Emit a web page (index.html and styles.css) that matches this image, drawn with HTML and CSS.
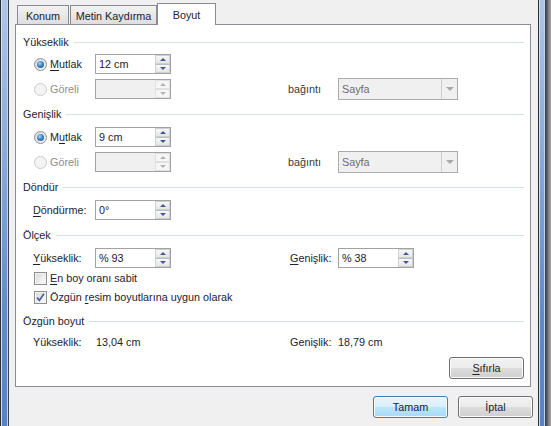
FILE: index.html
```html
<!DOCTYPE html>
<html lang="tr">
<head>
<meta charset="utf-8">
<title>Boyut</title>
<link rel="stylesheet" href="styles.css">
</head>
<body>
<div class="window">
  <div class="frame-l"></div>
  <div class="dialog">
    <div class="tabs">
      <div class="tab t-konum">Konum</div>
      <div class="tab t-metin">Metin Kaydırma</div>
      <div class="tab t-boyut active">Boyut</div>
    </div>
    <div class="panel">
      <div class="head mt9"><span>Yükseklik</span><i></i></div>
      <div class="row mt4">
        <div class="opt"><span class="radio on"></span><span><u>M</u>utlak</span></div>
        <div class="spin"><span class="val">12 cm</span><span class="arrows"><b class="up"></b><b class="dn"></b></span></div>
      </div>
      <div class="row mt4">
        <div class="opt dis"><span class="radio off"></span><span>Göreli</span></div>
        <div class="spin disabled"><span class="val"></span><span class="arrows"><b class="up"></b><b class="dn"></b></span></div>
        <span></span>
        <span class="rel">bağıntı</span>
        <div class="select"><span class="txt">Sayfa</span><span class="drop"><b></b></span></div>
      </div>

      <div class="head mt8"><span>Genişlik</span><i></i></div>
      <div class="row mt5">
        <div class="opt"><span class="radio on"></span><span>M<u>u</u>tlak</span></div>
        <div class="spin"><span class="val">9 cm</span><span class="arrows"><b class="up"></b><b class="dn"></b></span></div>
      </div>
      <div class="row mt4">
        <div class="opt dis"><span class="radio off"></span><span>Göreli</span></div>
        <div class="spin disabled"><span class="val"></span><span class="arrows"><b class="up"></b><b class="dn"></b></span></div>
        <span></span>
        <span class="rel">bağıntı</span>
        <div class="select"><span class="txt">Sayfa</span><span class="drop"><b></b></span></div>
      </div>

      <div class="head mt8"><span>Döndür</span><i></i></div>
      <div class="row mt5">
        <span class="lbl"><u>D</u>öndürme:</span>
        <div class="spin"><span class="val">0°</span><span class="arrows"><b class="up"></b><b class="dn"></b></span></div>
      </div>

      <div class="head mt7"><span>Ölçek</span><i></i></div>
      <div class="row mt5">
        <span class="lbl"><u>Y</u>ükseklik:</span>
        <div class="spin"><span class="val">% 93</span><span class="arrows"><b class="up"></b><b class="dn"></b></span></div>
        <span></span>
        <span class="lbl2"><u>G</u>enişlik:</span>
        <div class="spin"><span class="val">% 38</span><span class="arrows"><b class="up"></b><b class="dn"></b></span></div>
      </div>
      <div class="check mt2"><span class="cb"></span><span><u>E</u>n boy oranı sabit</span></div>
      <div class="check mt3"><span class="cb on"><svg width="11" height="11" viewBox="0 0 11 11"><path d="M2.2 5.6 L4.4 8.4 L8.9 1.8" fill="none" stroke="#4b5f98" stroke-width="1.7"/></svg></span><span>Özgün <u>r</u>esim boyutlarına uygun olarak</span></div>

      <div class="head mt8"><span>Özgün boyut</span><i></i></div>
      <div class="row vals mt5">
        <span class="lbl">Yükseklik:</span>
        <span class="v1">13,04 cm</span>
        <span></span>
        <span class="lbl2">Genişlik:</span>
        <span>18,79 cm</span>
      </div>
      <div class="reset-row">
        <button class="btn"><u>S</u>ıfırla</button>
      </div>
    </div>
    <div class="footer">
      <button class="btn default">Tamam</button>
      <button class="btn">İptal</button>
    </div>
  </div>
  <div class="frame-r"></div>
  <div class="shadow"></div>
</div>
</body>
</html>
```

FILE: styles.css
```css
* { box-sizing: border-box; }

body {
  margin: 0;
  width: 551px;
  height: 426px;
  overflow: hidden;
  background: #f0f0f0;
  font-family: "Liberation Sans", Arial, sans-serif;
  font-size: 10.8px;
  color: #1c2230;
}

u {
  text-decoration-thickness: 1px;
  text-underline-offset: 2px;
}

.window {
  display: flex;
  height: 426px;
}

.frame-l,
.frame-r {
  flex: none;
  height: 426px;
  border-left: 1px solid #2a2f36;
  border-right: 1px solid #3a4250;
  background: linear-gradient(#aec6e7, #86a7d8 40%, #5e8bca 75%, #5583c6);
  box-shadow: inset 1px 0 #d3e0f2, inset -1px 0 #c2d3ec;
}

.frame-l { width: 9px; }
.frame-r { width: 8px; }

.shadow {
  flex: none;
  width: 5px;
  height: 426px;
  background: linear-gradient(to right, #454545, #7d7d7d, #a9a9a9);
}

.dialog {
  flex: none;
  width: 529px;
  display: flex;
  flex-direction: column;
}

/* Tabs */
.tabs {
  display: flex;
  align-items: flex-end;
  height: 21px;
  margin-top: 3px;
  padding-left: 8px;
}

.tab {
  height: 19px;
  border: 1px solid #898c95;
  border-bottom: none;
  display: flex;
  align-items: center;
  justify-content: center;
  background: linear-gradient(#f3f3f3, #e8e8e8 50%, #dedede);
  padding-top: 1px;
}

.t-konum { width: 52px; }
.t-metin { width: 87px; margin-left: 1px; }

.t-boyut {
  width: 59px;
  height: 22px;
  margin-bottom: -1px;
  background: #fff;
  position: relative;
  z-index: 1;
  padding-top: 0;
}

/* Panel */
.panel {
  margin-left: 6px;
  width: 516px;
  height: 363px;
  border: 1px solid #898c95;
  background: #fff;
  padding-right: 6px;
  display: flex;
  flex-direction: column;
}

.mt2 { margin-top: 2px; }
.mt3 { margin-top: 3px; }
.mt4 { margin-top: 4px; }
.mt5 { margin-top: 5px; }
.mt7 { margin-top: 7px; }
.mt8 { margin-top: 8px; }
.mt9 { margin-top: 9px; }

.head {
  display: flex;
  align-items: center;
  height: 16px;
  padding-left: 7px;
  gap: 5px;
}

.head i {
  flex: 1;
  height: 1px;
  background: #d5dfe5;
}

.row {
  display: grid;
  grid-template-columns: 62px 76px 117px 50px 120px;
  height: 20px;
  align-items: center;
  padding-left: 17px;
}

.row.vals { height: 16px; }
.v1 { padding-left: 1px; }
.lbl2 { padding-left: 2px; }

.opt {
  display: flex;
  align-items: center;
  gap: 3px;
  margin-left: 1px;
}

.opt.dis { color: #8d8d8d; }
.rel { color: #3a3a3a; }

.radio {
  flex: none;
  width: 13px;
  height: 13px;
  border-radius: 50%;
  border: 1px solid #8e8f8f;
  background: radial-gradient(circle at 60% 65%, #fafafa, #dcdcdc 80%);
  display: flex;
  align-items: center;
  justify-content: center;
}

.radio.on::after {
  content: "";
  width: 7px;
  height: 7px;
  border-radius: 50%;
  background: radial-gradient(circle at 40% 35%, #a8d8f8 0, #3a86d0 45%, #15457f 100%);
}

.radio.off {
  border-color: #cacaca;
  background: #f4f4f4;
}

/* Spin box */
.spin {
  width: 76px;
  height: 20px;
  border: 1px solid #a2a2a2;
  background: #fff;
  display: flex;
}

.spin .val {
  flex: 1;
  padding-left: 3px;
  line-height: 18px;
}

.spin.disabled .val { background: #f0f0f0; }

.arrows {
  flex: none;
  width: 15px;
  display: flex;
  flex-direction: column;
}

.arrows b {
  flex: 1;
  border: 1px solid #cdd1d7;
  background: linear-gradient(#f8f8f8, #e6e6e6);
  display: flex;
  align-items: center;
  justify-content: center;
}

.arrows b.dn { border-top-color: #b9bec6; }

.arrows b::before {
  content: "";
  width: 0;
  height: 0;
  border-left: 3px solid transparent;
  border-right: 3px solid transparent;
}

.arrows b.up::before { border-bottom: 3px solid #3c5a93; }
.arrows b.dn::before { border-top: 3px solid #3c5a93; }

.spin.disabled .arrows b { background: #f6f6f6; border-color: #e0e0e0; }
.spin.disabled .arrows b.up::before { border-bottom-color: #b2b2b2; }
.spin.disabled .arrows b.dn::before { border-top-color: #b2b2b2; }

/* Dropdown */
.select {
  width: 120px;
  height: 22px;
  border: 1px solid #ababab;
  background: #f0f0f0;
  display: flex;
  color: #6d6d6d;
}

.select .txt {
  flex: 1;
  padding-left: 3px;
  line-height: 20px;
}

.select .drop {
  width: 16px;
  border-left: 1px solid #cfcfcf;
  display: flex;
  align-items: center;
  justify-content: center;
}

.select .drop b {
  width: 0;
  height: 0;
  border-left: 4px solid transparent;
  border-right: 4px solid transparent;
  border-top: 4px solid #a8a8a8;
}

/* Checkboxes */
.check {
  display: flex;
  align-items: center;
  gap: 3px;
  height: 16px;
  padding-left: 18px;
}

.cb {
  flex: none;
  width: 13px;
  height: 13px;
  border: 1px solid #8e8f8f;
  background: linear-gradient(135deg, #d6d6d6, #f6f6f6 80%);
  box-shadow: inset 0 0 0 1px #f2f2f2;
  display: flex;
  align-items: center;
  justify-content: center;
}

.cb svg { display: block; }

/* Buttons */
.reset-row {
  display: flex;
  justify-content: flex-end;
  margin-top: 7px;
}

.btn {
  width: 75px;
  height: 22px;
  padding: 0;
  font: inherit;
  color: #1c2230;
  border: 1px solid #707070;
  border-radius: 3px;
  background: linear-gradient(#f2f2f2, #ebebeb 50%, #dddddd 50%, #cfcfcf);
  box-shadow: inset 0 0 0 1px #fbfbfb;
}

.btn.default {
  border-color: #3c7fb1;
  background: linear-gradient(#e8f5fd, #d9f0fc 50%, #bee6fd 50%, #a7d9f5);
  box-shadow: inset 0 0 0 1px #f4fbff;
}

.footer {
  display: flex;
  justify-content: flex-end;
  gap: 10px;
  margin-top: 9px;
  padding-right: 5px;
}
```
